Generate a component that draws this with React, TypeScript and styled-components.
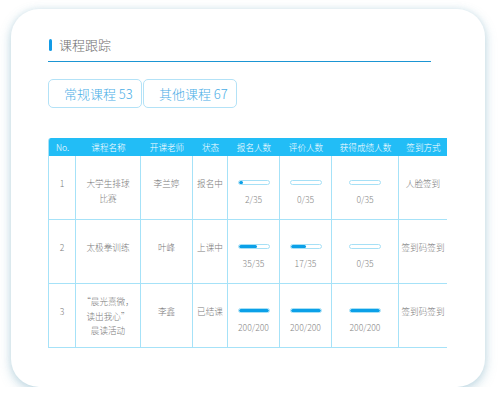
import React from "react";
import styled, { createGlobalStyle } from "styled-components";

const Global = createGlobalStyle`
  html, body { margin: 0; padding: 0; background: #ffffff; }
  body { font-family: "Noto Sans CJK SC", "Liberation Sans", sans-serif; font-weight: 300; }
  * { box-sizing: border-box; }
`;

const Card = styled.div`
  margin: 9px 0 0 11px;
  width: 474px;
  height: 378px;
  background: #ffffff;
  border-radius: 28px;
  box-shadow: 0 4px 12px rgba(95, 155, 180, 0.35), 0 0 6px rgba(150, 195, 210, 0.25);
  padding: 29px 0 0 37px;
`;

const Heading = styled.div`
  width: 383px;
  display: flex;
  align-items: center;
  gap: 7px;
  padding: 0 0 9px 1px;
  border-bottom: 1px solid #1b95d3;
`;

const HeadMark = styled.span`
  width: 3px;
  height: 12px;
  border-radius: 2px;
  background: #139be6;
`;

const HeadText = styled.span`
  font-size: 13px;
  line-height: 14px;
  color: #707070;
`;

const Tabs = styled.div`
  display: flex;
  gap: 1px;
  margin-top: 17px;
`;

const Tab = styled.div`
  width: 94px;
  height: 29px;
  border: 1px solid #b3e2f7;
  border-radius: 5px;
  display: flex;
  align-items: center;
  padding: 0 0 0 15px;
  font-size: 13px;
  color: #4aaee6;
  white-space: pre;
`;

const Table = styled.div`
  margin-top: 30px;
  width: 399px;
  display: grid;
  grid-template-columns: 27px 65px 52px 35px 52px 52px 67px 49px;
  border-left: 1px solid #a6e2f8;
  border-radius: 3px 0 0 0;
  overflow: hidden;
`;

const HeadCell = styled.div`
  height: 18px;
  background: #22bdf6;
  color: #ffffff;
  font-size: 8.6px;
  line-height: 18px;
  text-align: center;
  white-space: nowrap;
`;

const Cell = styled.div<{ $pt?: number }>`
  height: 64px;
  border-right: 1px solid #a6e2f8;
  border-bottom: 1px solid #a6e2f8;
  padding-top: ${(p) => p.$pt ?? 20}px;
  font-size: 8.6px;
  line-height: 14.5px;
  color: #7a7a7a;
  text-align: center;
  white-space: pre-line;
`;

const ProgCell = styled.div`
  height: 64px;
  border-right: 1px solid #a6e2f8;
  border-bottom: 1px solid #a6e2f8;
  padding-top: 24px;
  display: flex;
  flex-direction: column;
  align-items: center;
`;

const Bar = styled.div`
  width: 32px;
  height: 5px;
  border: 1px solid #a6e0f6;
  border-radius: 3px;
  overflow: hidden;
  background: #ffffff;
  display: flex;
`;

const Fill = styled.div`
  height: 100%;
  background: #0ba0e8;
  border-radius: 3px;
`;

const Count = styled.div`
  margin-top: 7px;
  font-size: 8.6px;
  line-height: 14px;
  color: #858585;
`;

const heads = ["No.", "课程名称", "开课老师", "状态", "报名人数", "评价人数", "获得成绩人数", "签到方式"];

type Row = {
  no: string;
  name: string;
  namePt?: number;
  teacher: string;
  status: string;
  progs: { text: string; pct: number }[];
  sign: string;
};

const rows: Row[] = [
  {
    no: "1",
    name: "大学生排球\n比赛",
    teacher: "李兰婷",
    status: "报名中",
    progs: [
      { text: "2/35", pct: 16 },
      { text: "0/35", pct: 0 },
      { text: "0/35", pct: 0 },
    ],
    sign: "人脸签到",
  },
  {
    no: "2",
    name: "太极拳训练",
    teacher: "叶峰",
    status: "上课中",
    progs: [
      { text: "35/35", pct: 60 },
      { text: "17/35", pct: 53 },
      { text: "0/35", pct: 0 },
    ],
    sign: "签到码签到",
  },
  {
    no: "3",
    name: "“晨光熹微，\n读出我心”\n晨读活动",
    namePt: 10,
    teacher: "李鑫",
    status: "已结课",
    progs: [
      { text: "200/200", pct: 100 },
      { text: "200/200", pct: 100 },
      { text: "200/200", pct: 100 },
    ],
    sign: "签到码签到",
  },
];

export default function App() {
  return (
    <>
      <Global />
      <Card>
        <Heading>
          <HeadMark />
          <HeadText>课程跟踪</HeadText>
        </Heading>
        <Tabs>
          <Tab>常规课程 53</Tab>
          <Tab>其他课程 67</Tab>
        </Tabs>
        <Table>
          {heads.map((h) => (
            <HeadCell key={h}>{h}</HeadCell>
          ))}
          {rows.map((r) => (
            <React.Fragment key={r.no}>
              <Cell>{r.no}</Cell>
              <Cell $pt={r.namePt}>{r.name}</Cell>
              <Cell>{r.teacher}</Cell>
              <Cell>{r.status}</Cell>
              {r.progs.map((p, i) => (
                <ProgCell key={i}>
                  <Bar>
                    {p.pct > 0 && <Fill style={{ width: `${p.pct}%` }} />}
                  </Bar>
                  <Count>{p.text}</Count>
                </ProgCell>
              ))}
              <Cell>{r.sign}</Cell>
            </React.Fragment>
          ))}
        </Table>
      </Card>
    </>
  );
}
